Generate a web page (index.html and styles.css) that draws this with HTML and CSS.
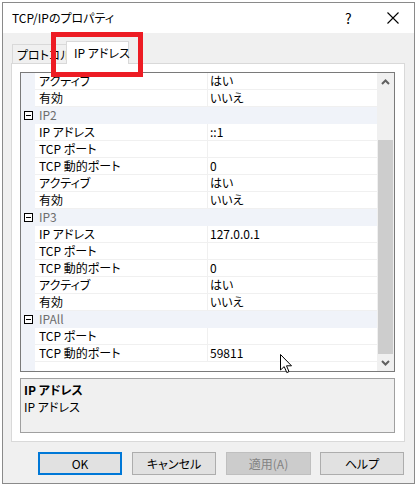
FILE: index.html
```html
<!DOCTYPE html>
<html lang="ja">
<head>
<meta charset="utf-8">
<title>TCP/IPのプロパティ</title>
<link rel="stylesheet" href="styles.css">
</head>
<body>
<div class="window">
  <div class="titlebar">
    <span class="title">TCP/IPのプロパティ</span>
    <span class="help">?</span>
    <span class="close"><svg width="12" height="12" viewBox="0 0 12 12"><path d="M0.5 0.5 L11.5 11.5 M11.5 0.5 L0.5 11.5" stroke="#000" stroke-width="1.1" fill="none"/></svg></span>
  </div>
  <div class="client">
    <div class="tabs">
      <div class="tab">プロトコル</div>
      <div class="tab active">IP アドレス</div>
    </div>
    <div class="panel">
      <div class="grid">
        <div class="rows">
          <div class="row"><span class="gut"></span><span class="name">アクティブ</span><span class="val">はい</span></div>
          <div class="row"><span class="gut"></span><span class="name">有効</span><span class="val">いいえ</span></div>
          <div class="row cat"><span class="gut"><i class="minus"></i></span><span class="cname">IP2</span></div>
          <div class="row"><span class="gut"></span><span class="name">IP アドレス</span><span class="val">::1</span></div>
          <div class="row"><span class="gut"></span><span class="name">TCP ポート</span><span class="val"></span></div>
          <div class="row"><span class="gut"></span><span class="name">TCP 動的ポート</span><span class="val">0</span></div>
          <div class="row"><span class="gut"></span><span class="name">アクティブ</span><span class="val">はい</span></div>
          <div class="row"><span class="gut"></span><span class="name">有効</span><span class="val">いいえ</span></div>
          <div class="row cat"><span class="gut"><i class="minus"></i></span><span class="cname">IP3</span></div>
          <div class="row"><span class="gut"></span><span class="name">IP アドレス</span><span class="val">127.0.0.1</span></div>
          <div class="row"><span class="gut"></span><span class="name">TCP ポート</span><span class="val"></span></div>
          <div class="row"><span class="gut"></span><span class="name">TCP 動的ポート</span><span class="val">0</span></div>
          <div class="row"><span class="gut"></span><span class="name">アクティブ</span><span class="val">はい</span></div>
          <div class="row"><span class="gut"></span><span class="name">有効</span><span class="val">いいえ</span></div>
          <div class="row cat"><span class="gut"><i class="minus"></i></span><span class="cname">IPAll</span></div>
          <div class="row"><span class="gut"></span><span class="name">TCP ポート</span><span class="val"></span></div>
          <div class="row"><span class="gut"></span><span class="name">TCP 動的ポート</span><span class="val">59811</span></div>
        </div>
        <div class="scrollbar">
          <div class="arrow"><svg width="9" height="6" viewBox="0 0 9 6"><path d="M1 5 L4.5 1.5 L8 5" stroke="#606060" stroke-width="2" fill="none"/></svg></div>
          <div class="track"><div class="thumb"></div></div>
          <div class="arrow"><svg width="9" height="6" viewBox="0 0 9 6"><path d="M1 1 L4.5 4.5 L8 1" stroke="#606060" stroke-width="2" fill="none"/></svg></div>
        </div>
      </div>
      <div class="desc">
        <div class="desc-title">IP アドレス</div>
        <div class="desc-text">IP アドレス</div>
      </div>
    </div>
    <div class="buttons">
      <button class="btn default">OK</button>
      <button class="btn">キャンセル</button>
      <button class="btn disabled">適用(A)</button>
      <button class="btn">ヘルプ</button>
    </div>
  </div>
</div>
<div class="highlight"></div>
<svg class="cursor" width="13" height="20" viewBox="0 0 13 20"><path d="M0.5 0.5 L0.5 16 L4.2 12.6 L6.8 18.6 L9 17.6 L6.5 11.8 L11.5 11.8 Z" fill="#fff" stroke="#000" stroke-width="1"/></svg>
</body>
</html>
```
FILE: styles.css
```css
html, body {
  margin: 0;
  padding: 0;
  background: #ffffff;
}
body {
  position: relative;
  width: 418px;
  height: 486px;
  overflow: hidden;
  font-family: "Noto Sans CJK JP", "Noto Sans", sans-serif;
  font-feature-settings: "palt";
  font-size: 12px;
  color: #000;
}
.window {
  margin: 2px 0 0 2px;
  width: 411px;
  height: 480px;
  border: 1px solid #8a8a8a;
  background: #f0f0f0;
  display: flex;
  flex-direction: column;
}
.titlebar {
  height: 30px;
  background: #ffffff;
  display: flex;
  align-items: center;
  padding-left: 9px;
}
.title {
  flex: 1;
  font-size: 12px;
  line-height: 16px;
}
.help {
  width: 14px;
  font-size: 14px;
  margin-right: 28px;
}
.close {
  width: 12px;
  height: 12px;
  margin-right: 15px;
  display: flex;
}
.client {
  flex: 1;
  display: flex;
  flex-direction: column;
  padding: 8px 0 0 8px;
}
.tabs {
  display: flex;
  align-items: flex-end;
  height: 22px;
  padding-left: 1px;
  position: relative;
  z-index: 2;
}
.tab {
  height: 19px;
  line-height: 19px;
  width: 56px;
  padding-left: 4px;
  box-sizing: border-box;
  border: 1px solid #d9d9d9;
  border-bottom: none;
  background: #f0f0f0;
  white-space: nowrap;
}
.tab.active {
  height: 23px;
  line-height: 21px;
  width: 63px;
  padding-left: 7px;
  margin-left: -2px;
  margin-bottom: -1px;
  background: #ffffff;
}
.panel {
  width: 384px;
  height: 369px;
  border: 1px solid #d9d9d9;
  background: #ffffff;
  display: flex;
  flex-direction: column;
  padding: 8px 0 0 8px;
}
.grid {
  width: 373px;
  height: 298px;
  border: 1px solid #7a7a7a;
  background: #ffffff;
  display: flex;
}
.rows {
  flex: 1;
  display: flex;
  flex-direction: column;
  background: linear-gradient(to right, #f0f3f9 0, #f0f3f9 14px, #ffffff 14px);
}
.row {
  height: 16px;
  border-bottom: 1px solid #f0f0f0;
  display: flex;
  align-items: center;
  line-height: 16px;
}
.gut {
  width: 14px;
  height: 17px;
  margin-bottom: -1px;
  background: #f0f3f9;
  display: flex;
  align-items: center;
  justify-content: center;
}
.name {
  width: 168px;
  padding-left: 4px;
  height: 16px;
  border-right: 1px solid #f0f0f0;
  white-space: nowrap;
}
.val {
  flex: 1;
  padding-left: 2px;
  height: 16px;
}
.row.cat {
  background: #f0f3f9;
  border-bottom-color: #f0f3f9;
}
.cname {
  padding-left: 4px;
  color: #6d6d6d;
}
.minus {
  width: 7px;
  height: 7px;
  border: 1px solid #000;
  background: #fff;
  position: relative;
  display: block;
}
.minus::after {
  content: "";
  position: absolute;
  left: 1px;
  top: 3px;
  width: 5px;
  height: 1px;
  background: #000;
}
.scrollbar {
  width: 17px;
  background: #f0f0f0;
  display: flex;
  flex-direction: column;
}
.arrow {
  height: 17px;
  display: flex;
  align-items: center;
  justify-content: center;
}
.track {
  flex: 1;
  display: flex;
  flex-direction: column;
  justify-content: flex-end;
  padding: 0 1px;
}
.thumb {
  height: 214px;
  background: #cdcdcd;
}
.desc {
  margin-top: 6px;
  width: 370px;
  height: 51px;
  border: 1px solid #a0a0a0;
  background: #f0f0f0;
  padding: 2px 0 0 3px;
  line-height: 17px;
}
.desc-title {
  font-weight: bold;
}
.buttons {
  display: flex;
  margin-top: 10px;
  padding-left: 27px;
}
.btn {
  width: 85px;
  height: 23px;
  margin-right: 10px;
  font-family: "Noto Sans CJK JP", "Noto Sans", sans-serif;
  font-feature-settings: "palt";
  font-size: 12px;
  background: #e1e1e1;
  border: 1px solid #adadad;
  color: #000;
  padding: 0;
}
.btn.default {
  border: 2px solid #0078d7;
}
.btn.disabled {
  background: #cccccc;
  border-color: #bfbfbf;
  color: #838383;
  width: 86px;
  margin-right: 9px;
}
.highlight {
  position: absolute;
  left: 51px;
  top: 32px;
  width: 82px;
  height: 35px;
  border: 5px solid #ed1c24;
  z-index: 5;
}
.cursor {
  position: absolute;
  left: 280px;
  top: 354px;
  z-index: 6;
}
```
